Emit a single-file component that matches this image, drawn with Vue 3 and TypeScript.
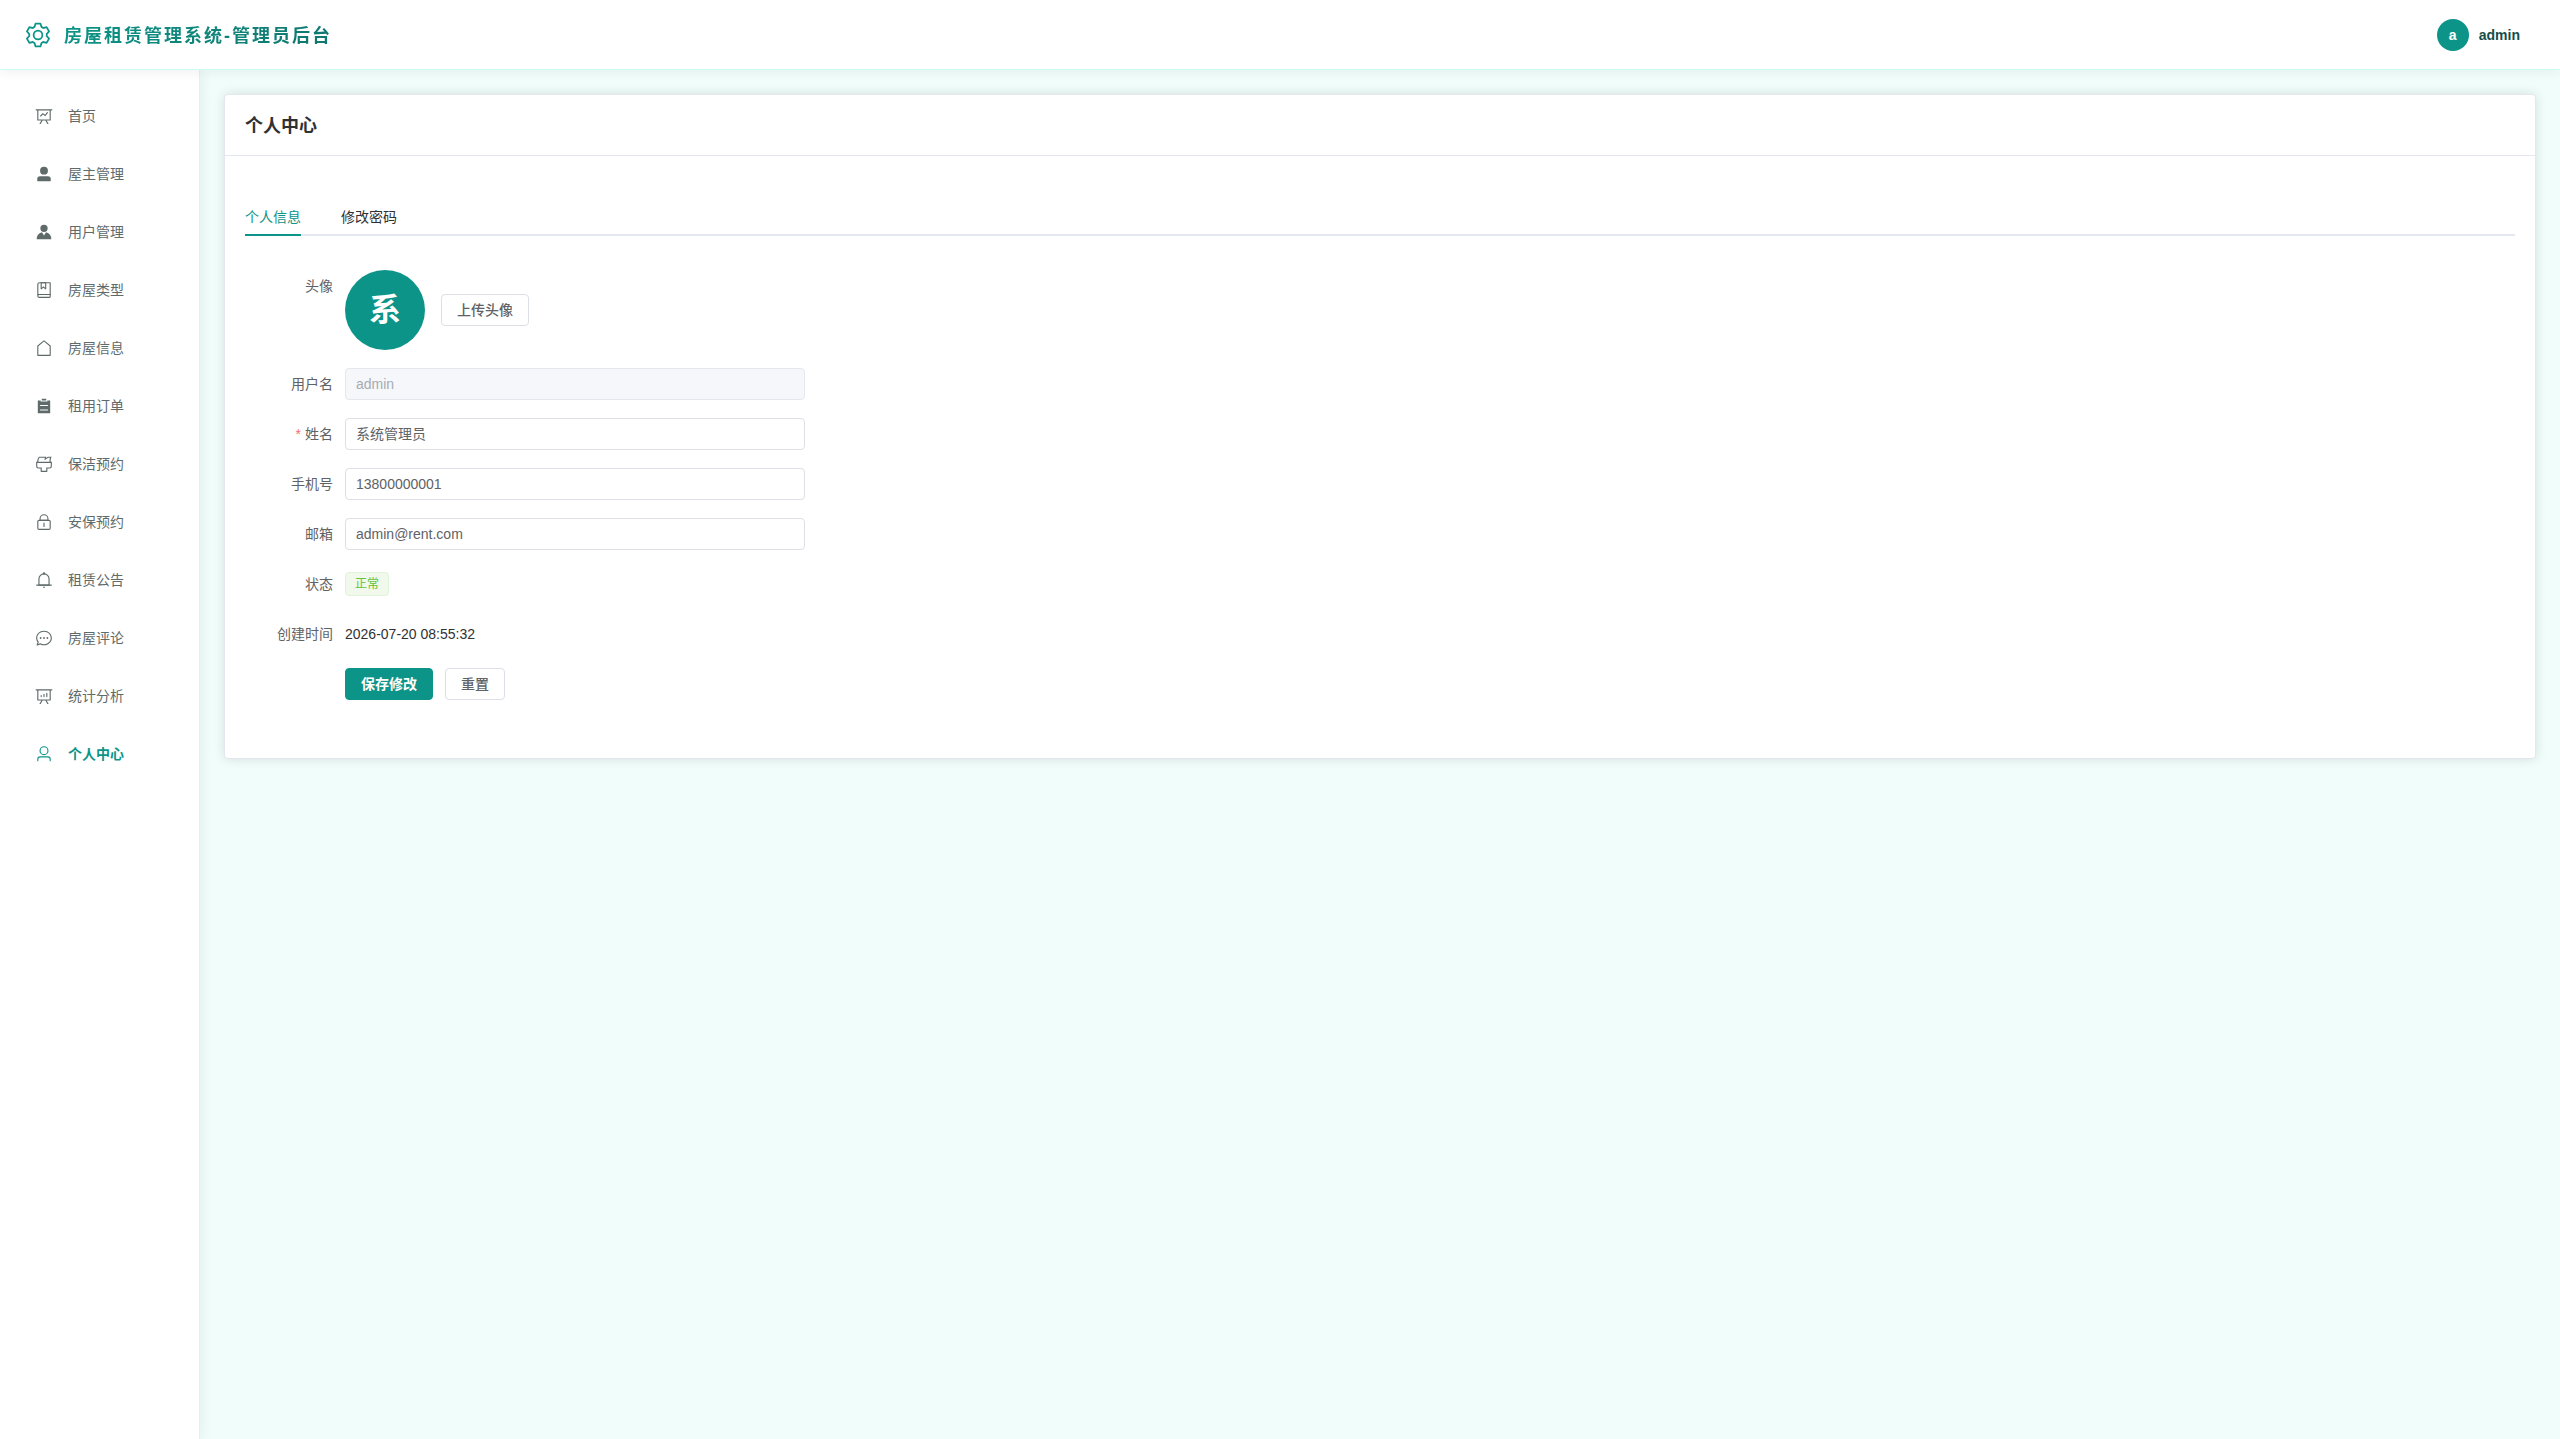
<script setup lang="ts">
import { reactive, ref } from 'vue'

interface MenuItem {
  label: string
  paths: string[]
}

const settingPath =
  'M600.704 64a32 32 0 0 1 30.464 22.208l35.2 109.376c14.784 7.232 28.928 15.36 42.432 24.512l112.384-24.192a32 32 0 0 1 34.432 15.36L944.32 364.8a32 32 0 0 1-4.032 37.504l-77.12 85.12a357.12 357.12 0 0 1 0 49.024l77.12 85.248a32 32 0 0 1 4.032 37.504l-88.704 153.6a32 32 0 0 1-34.432 15.296L708.8 803.904c-13.44 9.088-27.648 17.28-42.368 24.512l-35.264 109.376A32 32 0 0 1 600.704 960H423.296a32 32 0 0 1-30.464-22.208L357.696 828.48a351.616 351.616 0 0 1-42.56-24.64l-112.32 24.256a32 32 0 0 1-34.432-15.36L79.68 659.2a32 32 0 0 1 4.032-37.504l77.12-85.248a357.12 357.12 0 0 1 0-48.896l-77.12-85.248A32 32 0 0 1 79.68 364.8l88.704-153.6a32 32 0 0 1 34.432-15.296l112.32 24.256c13.568-9.152 27.776-17.408 42.56-24.64l35.2-109.312A32 32 0 0 1 423.232 64H600.64zm-23.424 64H446.72l-36.352 113.088-24.512 11.968a294.113 294.113 0 0 0-34.816 20.096l-22.656 15.36-116.224-25.088-65.28 113.152 79.68 88.192-1.92 27.136a293.12 293.12 0 0 0 0 40.192l1.92 27.136-79.808 88.192 65.344 113.152 116.224-25.024 22.656 15.296a294.113 294.113 0 0 0 34.816 20.096l24.512 11.968L446.72 896h130.688l36.48-113.152 24.448-11.904a288.282 288.282 0 0 0 34.752-20.096l22.592-15.296 116.288 25.024 65.28-113.152-79.744-88.192 1.92-27.136a293.12 293.12 0 0 0 0-40.256l-1.92-27.136 79.808-88.128-65.344-113.152-116.288 24.96-22.592-15.232a287.616 287.616 0 0 0-34.752-20.096l-24.448-11.904L577.344 128zM512 320a192 192 0 1 1 0 384 192 192 0 0 1 0-384zm0 64a128 128 0 1 0 0 256 128 128 0 0 0 0-256z'

const menu: MenuItem[] = [
  {
    label: '首页',
    paths: [
      'M359.168 768H160a32 32 0 0 1-32-32V192H64a32 32 0 0 1 0-64h896a32 32 0 1 1 0 64h-64v544a32 32 0 0 1-32 32H665.216l110.848 192h-73.856L591.36 768H433.024L322.176 960H248.32l110.848-192zM832 192H192v512h640V192zM342.656 534.656a32 32 0 1 1-45.312-45.312L444.992 341.76l125.44 94.08L679.04 300.032a32 32 0 1 1 49.92 39.936L581.632 524.224 451.008 426.24 342.656 534.592z',
    ],
  },
  {
    label: '屋主管理',
    paths: [
      'M288 320a224 224 0 1 0 448 0 224 224 0 1 0-448 0zm544 608H160a32 32 0 0 1-32-32v-96a160 160 0 0 1 160-160h448a160 160 0 0 1 160 160v96a32 32 0 0 1-32 32z',
    ],
  },
  {
    label: '用户管理',
    paths: [
      'M628.736 528.896A416 416 0 0 1 928 928H96a415.872 415.872 0 0 1 299.264-399.104L512 704l116.736-175.104zM720 304a208 208 0 1 1-416 0 208 208 0 0 1 416 0z',
    ],
  },
  {
    label: '房屋类型',
    paths: [
      'M192 736h640V128H256a64 64 0 0 0-64 64v544zm64-672h608a32 32 0 0 1 32 32v672a32 32 0 0 1-32 32H160l-32 57.536V192A128 128 0 0 1 256 64z',
      'M240 800a48 48 0 1 0 0 96h592v-96H240zm0-64h656v160a64 64 0 0 1-64 64H240a112 112 0 0 1 0-224zm144-608v250.88l96-76.8 96 76.8V128H384zm-64-64h320v381.44a32 32 0 0 1-51.968 24.96L480 384l-108.032 86.4A32 32 0 0 1 320 445.44V64z',
    ],
  },
  {
    label: '房屋信息',
    paths: [
      'M192 413.952V896h640V413.952L512 147.328 192 413.952zM139.52 374.4l352-293.312a32 32 0 0 1 40.96 0l352 293.312A32 32 0 0 1 896 398.976V928a32 32 0 0 1-32 32H160a32 32 0 0 1-32-32V398.976a32 32 0 0 1 11.52-24.576z',
    ],
  },
  {
    label: '租用订单',
    paths: [
      'M704 192h160v736H160V192h160v64h384v-64zM288 512h448v-64H288v64zm0 256h448v-64H288v64zm96-576V96h256v96H384z',
    ],
  },
  {
    label: '保洁预约',
    paths: [
      'M896 448H128v192a64 64 0 0 0 64 64h192v192h256V704h192a64 64 0 0 0 64-64V448zm-770.752-64c0-47.552 5.248-90.24 15.552-128 14.72-54.016 42.496-107.392 83.2-160h417.28l-15.36 70.336L736 96h211.2c-24.832 42.88-41.92 96.256-51.2 160a663.872 663.872 0 0 0-6.144 128H960v256a128 128 0 0 1-128 128H704v160a32 32 0 0 1-32 32H352a32 32 0 0 1-32-32V768H192A128 128 0 0 1 64 640V384h61.248zm64 0h636.544c-2.048-45.824.256-91.584 6.848-137.216 4.48-30.848 10.688-59.776 18.688-86.784h-96.64l-221.12 141.248L561.92 160H256.512c-25.856 37.888-43.776 75.456-53.952 112.832-8.768 32.064-13.248 69.12-13.312 111.168z',
    ],
  },
  {
    label: '安保预约',
    paths: [
      'M224 448a32 32 0 0 0-32 32v384a32 32 0 0 0 32 32h576a32 32 0 0 0 32-32V480a32 32 0 0 0-32-32H224zm0-64h576a96 96 0 0 1 96 96v384a96 96 0 0 1-96 96H224a96 96 0 0 1-96-96V480a96 96 0 0 1 96-96z',
      'M512 544a32 32 0 0 1 32 32v192a32 32 0 1 1-64 0V576a32 32 0 0 1 32-32zm192-160v-64a192 192 0 1 0-384 0v64h384zM512 64a256 256 0 0 1 256 256v128H256V320A256 256 0 0 1 512 64z',
    ],
  },
  {
    label: '租赁公告',
    paths: [
      'M512 64a64 64 0 0 1 64 64v64H448v-64a64 64 0 0 1 64-64z',
      'M256 768h512V448a256 256 0 1 0-512 0v320zm256-640a320 320 0 0 1 320 320v384H192V448a320 320 0 0 1 320-320z',
      'M96 768h832q32 0 32 32t-32 32H96q-32 0-32-32t32-32zm352 128h128a64 64 0 0 1-128 0z',
    ],
  },
  {
    label: '房屋评论',
    paths: [
      'm174.72 855.68 135.296-45.12 23.68 11.84C388.096 849.536 448.576 864 512 864c211.84 0 384-166.784 384-352S723.84 160 512 160 128 326.784 128 512c0 69.12 24.96 139.264 70.848 199.232l22.08 28.8-46.272 115.584zm-45.248 82.56A32 32 0 0 1 89.6 896l58.368-145.92C94.72 680.32 64 596.864 64 512 64 299.904 256 96 512 96s448 203.904 448 416-192 416-448 416a461.056 461.056 0 0 1-206.912-48.384l-175.616 58.56z',
      'M512 563.2a51.2 51.2 0 1 1 0-102.4 51.2 51.2 0 0 1 0 102.4zm192 0a51.2 51.2 0 1 1 0-102.4 51.2 51.2 0 0 1 0 102.4zm-384 0a51.2 51.2 0 1 1 0-102.4 51.2 51.2 0 0 1 0 102.4z',
    ],
  },
  {
    label: '统计分析',
    paths: [
      'm665.216 768 110.848 192h-73.856L591.36 768H433.024L322.176 960H248.32l110.848-192H160a32 32 0 0 1-32-32V192H64a32 32 0 0 1 0-64h896a32 32 0 1 1 0 64h-64v544a32 32 0 0 1-32 32H665.216zM832 192H192v512h640V192zM352 448a32 32 0 0 1 32 32v64a32 32 0 0 1-64 0v-64a32 32 0 0 1 32-32zm160-64a32 32 0 0 1 32 32v128a32 32 0 0 1-64 0V416a32 32 0 0 1 32-32zm160-64a32 32 0 0 1 32 32v192a32 32 0 1 1-64 0V352a32 32 0 0 1 32-32z',
    ],
  },
  {
    label: '个人中心',
    paths: [
      'M512 512a192 192 0 1 0 0-384 192 192 0 0 0 0 384zm0 64a256 256 0 1 1 0-512 256 256 0 0 1 0 512zm320 320v-96a96 96 0 0 0-96-96H288a96 96 0 0 0-96 96v96a32 32 0 1 1-64 0v-96a160 160 0 0 1 160-160h448a160 160 0 0 1 160 160v96a32 32 0 1 1-64 0z',
    ],
  },
]

const tabs = ['个人信息', '修改密码']
const activeMenu = ref('个人中心')
const activeTab = ref('个人信息')

const defaults = { name: '系统管理员', phone: '13800000001', email: 'admin@rent.com' }
const form = reactive({ username: 'admin', ...defaults })

function reset() {
  Object.assign(form, defaults)
}
</script>

<template>
  <div class="layout">
    <header class="topbar">
      <div class="brand">
        <svg class="brand-icon" viewBox="0 0 1024 1024" aria-hidden="true"><path :d="settingPath" /></svg>
        <h1 class="brand-title">房屋租赁管理系统-管理员后台</h1>
      </div>
      <div class="account">
        <span class="avatar avatar-small">a</span>
        <span class="account-name">admin</span>
      </div>
    </header>

    <div class="body">
      <nav class="sidebar">
        <a
          v-for="item in menu"
          :key="item.label"
          href="#"
          class="menu-item"
          :class="{ active: item.label === activeMenu }"
          @click.prevent="activeMenu = item.label"
        >
          <svg class="menu-icon" viewBox="0 0 1024 1024" aria-hidden="true">
            <path v-for="d in item.paths" :key="d" :d="d" />
          </svg>
          <span>{{ item.label }}</span>
        </a>
      </nav>

      <main class="content">
        <section class="card">
          <h2 class="card-title">个人中心</h2>
          <div class="card-body">
            <div class="tabs" role="tablist">
              <button
                v-for="tab in tabs"
                :key="tab"
                type="button"
                role="tab"
                class="tab"
                :class="{ active: tab === activeTab }"
                :aria-selected="tab === activeTab"
                @click="activeTab = tab"
              >
                {{ tab }}
              </button>
            </div>

            <form class="form" @submit.prevent>
              <div class="row">
                <span class="label">头像</span>
                <div class="field avatar-field">
                  <span class="avatar avatar-large">系</span>
                  <button type="button" class="button">上传头像</button>
                </div>
              </div>
              <div class="row">
                <label class="label" for="username">用户名</label>
                <input id="username" v-model="form.username" class="field input" type="text" disabled />
              </div>
              <div class="row">
                <label class="label required" for="name">姓名</label>
                <input id="name" v-model="form.name" class="field input" type="text" />
              </div>
              <div class="row">
                <label class="label" for="phone">手机号</label>
                <input id="phone" v-model="form.phone" class="field input" type="text" />
              </div>
              <div class="row">
                <label class="label" for="email">邮箱</label>
                <input id="email" v-model="form.email" class="field input" type="text" />
              </div>
              <div class="row">
                <span class="label">状态</span>
                <div class="field"><span class="tag">正常</span></div>
              </div>
              <div class="row">
                <span class="label">创建时间</span>
                <div class="field">2026-07-20 08:55:32</div>
              </div>
              <div class="row">
                <span class="label"></span>
                <div class="field actions">
                  <button type="submit" class="button primary">保存修改</button>
                  <button type="button" class="button" @click="reset">重置</button>
                </div>
              </div>
            </form>
          </div>
        </section>
      </main>
    </div>
  </div>
</template>

<style>
body {
  margin: 0;
  font-family: "Liberation Sans", "Noto Sans CJK SC", sans-serif;
}
</style>

<style scoped>
.layout {
  display: flex;
  flex-direction: column;
  min-height: 100vh;
  font-size: 14px;
  color: #303133;
}

.layout * {
  box-sizing: border-box;
}

.topbar {
  position: relative;
  z-index: 2;
  display: flex;
  align-items: center;
  justify-content: space-between;
  height: 70px;
  padding: 0 40px 0 24px;
  background: #fff;
  border-bottom: 1px solid #ccfbf1;
  box-shadow: 0 2px 12px rgba(0, 0, 0, 0.06);
}

.brand {
  display: flex;
  align-items: center;
  gap: 12px;
}

.brand-icon {
  width: 28px;
  height: 28px;
  fill: #0d9488;
}

.brand-title {
  margin: 0;
  padding-top: 2px;
  font-size: 18px;
  line-height: 28px;
  font-weight: 700;
  letter-spacing: 2px;
  color: transparent;
  background: linear-gradient(135deg, #0d9488, #0f766e);
  background-clip: text;
}

.account {
  display: flex;
  align-items: center;
  gap: 10px;
}

.account-name {
  font-weight: 700;
  color: #134e4a;
}

.avatar {
  display: flex;
  align-items: center;
  justify-content: center;
  border-radius: 50%;
  background: #0d9488;
  color: #fff;
  font-weight: 700;
}

.avatar-small {
  width: 32px;
  height: 32px;
}

.avatar-large {
  width: 80px;
  height: 80px;
  font-size: 32px;
  line-height: 44px;
}

.body {
  display: flex;
  flex: 1;
}

.sidebar {
  position: relative;
  z-index: 1;
  display: flex;
  flex-direction: column;
  flex: none;
  gap: 8px;
  width: 200px;
  padding: 21px 12px;
  background: #fff;
  border-right: 1px solid #ccfbf1;
  box-shadow: 2px 0 12px rgba(0, 0, 0, 0.06);
}

.menu-item {
  display: flex;
  align-items: center;
  gap: 12px;
  height: 50px;
  padding: 0 20px;
  line-height: 20px;
  color: #5f6b6a;
  text-decoration: none;
}

.menu-item.active {
  color: #0d9488;
  font-weight: 700;
}

.menu-icon {
  width: 24px;
  height: 18px;
  fill: currentColor;
}

.content {
  flex: 1;
  min-width: 0;
  padding: 24px;
  background: #f0fdfa;
}

.card {
  background: #fff;
  border: 1px solid #e4e7ed;
  border-radius: 4px;
  box-shadow: 0 0 12px rgba(0, 0, 0, 0.12);
}

.card-title {
  margin: 0;
  padding: 18px 20px 16px;
  border-bottom: 1px solid #e4e7ed;
  font-size: 18px;
  line-height: 26px;
  font-weight: 700;
}

.card-body {
  padding: 40px 20px;
}

.tabs {
  display: flex;
  gap: 40px;
  height: 40px;
  margin-bottom: 34px;
  box-shadow: inset 0 -2px #e4e7ed;
}

.tab {
  padding: 0;
  border: 0;
  background: none;
  font: inherit;
  color: #303133;
  cursor: pointer;
}

.tab.active {
  color: #0d9488;
  box-shadow: inset 0 -2px #0d9488;
}

.form {
  display: flex;
  flex-direction: column;
  gap: 18px;
  max-width: 560px;
  padding-bottom: 18px;
}

.row {
  display: flex;
}

.label {
  flex: none;
  width: 100px;
  padding-right: 12px;
  line-height: 32px;
  text-align: right;
  color: #606266;
}

.required::before {
  content: "*";
  margin-right: 4px;
  color: #f56c6c;
}

.field {
  display: flex;
  align-items: center;
  flex: 1;
  min-width: 0;
  min-height: 32px;
}

.avatar-field {
  gap: 16px;
}

.actions {
  gap: 12px;
}

.input {
  padding: 0 10px;
  border: 1px solid #dcdfe6;
  border-radius: 4px;
  background: #fff;
  font: inherit;
  line-height: 20px;
  color: #606266;
}

.input:disabled {
  border-color: #e4e7ed;
  background: #f5f7fa;
  color: #a8abb2;
}

.tag {
  height: 24px;
  padding: 0 9px;
  border: 1px solid #e1f3d8;
  border-radius: 4px;
  background: #f0f9eb;
  color: #67c23a;
  font-size: 12px;
  line-height: 22px;
}

.button {
  height: 32px;
  padding: 0 15px;
  border: 1px solid #dcdfe6;
  border-radius: 4px;
  background: #fff;
  font: inherit;
  font-weight: 500;
  line-height: 20px;
  color: #606266;
  cursor: pointer;
}

.button.primary {
  border-color: #0d9488;
  background: #0d9488;
  color: #fff;
  font-weight: 700;
}
</style>
